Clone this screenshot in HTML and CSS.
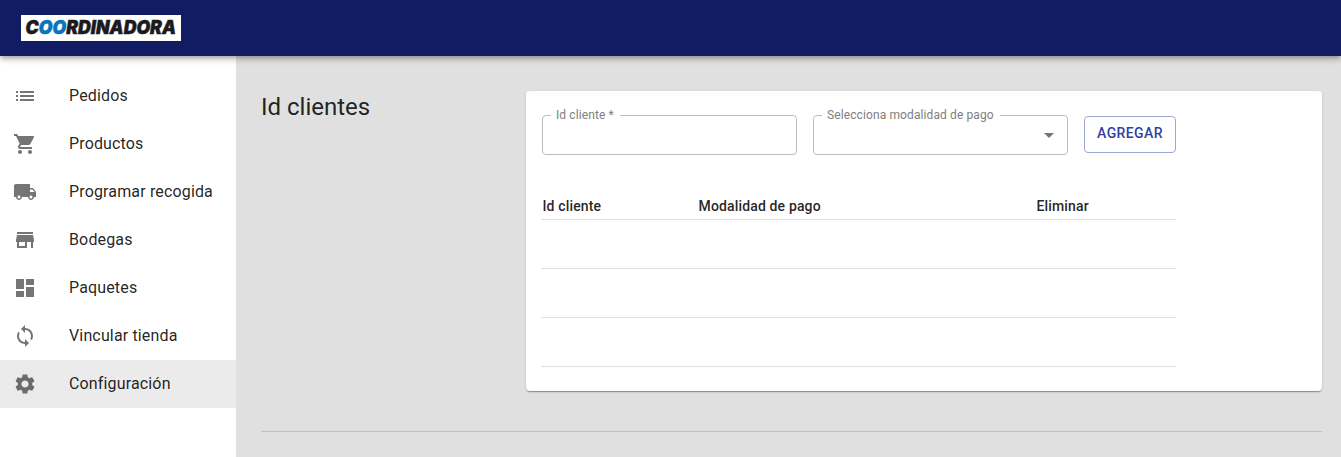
FILE: index.html
```html
<!DOCTYPE html>
<html lang="es">
<head>
<meta charset="utf-8">
<title>Coordinadora - Configuración</title>
<link rel="stylesheet" href="styles.css">
</head>
<body>
<header class="appbar">
  <svg class="logo" viewBox="0 0 160 26" role="img" aria-label="Coordinadora">
    <rect width="160" height="26" fill="#fff"/>
    <text class="logo-text" x="4.600" y="19" textLength="150.400" lengthAdjust="spacingAndGlyphs">C<tspan class="logo-blue">OO</tspan>RDINADORA</text>
  </svg>
</header>
<div class="body">
  <nav class="sidebar">
    <a class="item"><svg class="icon" viewBox="0 0 24 24"><path d="M3 13h2v-2H3v2zm0 4h2v-2H3v2zm0-8h2V7H3v2zm4 4h14v-2H7v2zm0 4h14v-2H7v2zM7 7v2h14V7H7z"/></svg><span>Pedidos</span></a>
    <a class="item"><svg class="icon" viewBox="0 0 24 24"><path d="M7 18c-1.100 0-1.990.9-1.990 2S5.900 22 7 22s2-.9 2-2-.9-2-2-2zM1 2v2h2l3.600 7.590-1.350 2.450c-.16.280-.25.610-.25.960 0 1.100.9 2 2 2h12v-2H7.420c-.14 0-.25-.11-.25-.25l.03-.12.900-1.630h7.450c.75 0 1.410-.41 1.750-1.030l3.580-6.490c.08-.14.120-.31.120-.48 0-.55-.45-1-1-1H5.210l-.94-2H1zm16 16c-1.100 0-1.990.9-1.990 2s.89 2 1.990 2 2-.9 2-2-.9-2-2-2z"/></svg><span>Productos</span></a>
    <a class="item"><svg class="icon" viewBox="0 0 24 24"><path d="M20 8h-3V4H3c-1.100 0-2 .9-2 2v11h2c0 1.660 1.340 3 3 3s3-1.340 3-3h6c0 1.660 1.340 3 3 3s3-1.340 3-3h2v-5l-3-4zM6 18.500c-.83 0-1.500-.67-1.500-1.500s.67-1.500 1.500-1.500 1.500.67 1.500 1.500-.67 1.500-1.500 1.500zm13.500-9l1.960 2.500H17V9.500h2.500zm-1.500 9c-.83 0-1.500-.67-1.500-1.500s.67-1.500 1.500-1.500 1.500.67 1.500 1.500-.67 1.500-1.500 1.500z"/></svg><span>Programar recogida</span></a>
    <a class="item"><svg class="icon" viewBox="0 0 24 24"><path d="M20 4H4v2h16V4zm1 10v-2l-1-5H4l-1 5v2h1v6h10v-6h4v6h2v-6h1zm-9 4H6v-4h6v4z"/></svg><span>Bodegas</span></a>
    <a class="item"><svg class="icon" viewBox="0 0 24 24"><path d="M3 13h8V3H3v10zm0 8h8v-6H3v6zm10 0h8V11h-8v10zm0-18v6h8V3h-8z"/></svg><span>Paquetes</span></a>
    <a class="item"><svg class="icon" viewBox="0 0 24 24"><path d="M12 4V1L8 5l4 4V6c3.310 0 6 2.690 6 6 0 1.010-.25 1.970-.7 2.800l1.460 1.460C19.540 15.030 20 13.570 20 12c0-4.420-3.580-8-8-8zm0 14c-3.310 0-6-2.690-6-6 0-1.010.25-1.970.7-2.800L5.240 7.740C4.460 8.970 4 10.430 4 12c0 4.420 3.580 8 8 8v3l4-4-4-4v3z"/></svg><span>Vincular tienda</span></a>
    <a class="item selected"><svg class="icon" viewBox="0 0 24 24"><path d="M19.140 12.940c.04-.3.060-.61.060-.94 0-.32-.02-.64-.07-.94l2.030-1.580c.18-.14.230-.41.120-.61l-1.920-3.320c-.12-.22-.37-.29-.59-.22l-2.390.96c-.5-.38-1.030-.7-1.620-.94l-.36-2.540c-.04-.24-.24-.41-.48-.41h-3.840c-.24 0-.43.170-.47.410l-.36 2.540c-.59.240-1.130.57-1.620.94l-2.390-.96c-.22-.08-.47 0-.59.220L2.740 8.870c-.12.210-.08.470.12.610l2.030 1.580c-.05.300-.09.630-.09.940s.02.640.07.940l-2.030 1.580c-.18.140-.23.410-.12.610l1.920 3.320c.12.220.37.290.59.220l2.390-.96c.5.380 1.030.7 1.620.94l.36 2.540c.05.240.24.410.48.410h3.840c.24 0 .44-.17.470-.41l.36-2.540c.59-.24 1.130-.56 1.620-.94l2.390.96c.22.080.47 0 .59-.22l1.920-3.320c.12-.22.070-.47-.12-.61l-2.010-1.580zM12 15.600c-1.980 0-3.600-1.620-3.600-3.600s1.620-3.600 3.600-3.600 3.600 1.620 3.600 3.600-1.620 3.600-3.600 3.600z"/></svg><span>Configuración</span></a>
  </nav>
  <main class="content">
    <section class="section">
      <h1 class="title">Id clientes</h1>
      <div class="card">
        <div class="form">
          <fieldset class="field"><legend>Id cliente&nbsp;*</legend></fieldset>
          <fieldset class="field"><legend>Selecciona modalidad de pago</legend><svg class="arrow" viewBox="0 0 24 24"><path d="M7 10l5 5 5-5z"/></svg></fieldset>
          <button class="add">AGREGAR</button>
        </div>
        <div class="table">
          <div class="row head"><span>Id cliente</span><span>Modalidad de pago</span><span>Eliminar</span></div>
          <div class="row"></div>
          <div class="row"></div>
          <div class="row"></div>
        </div>
      </div>
    </section>
    <hr class="divider">
  </main>
</div>
</body>
</html>
```
FILE: styles.css
```css
* { box-sizing: border-box; }
body {
  margin: 0;
  height: 457px;
  overflow: hidden;
  display: flex;
  flex-direction: column;
  background: #e0e0e0;
  color: rgba(0, 0, 0, 0.87);
  font-family: Roboto, "Liberation Sans", sans-serif;
}
.appbar {
  position: relative;
  z-index: 1;
  flex: 0 0 56px;
  display: flex;
  align-items: center;
  padding-left: 21px;
  background: #121c62;
  box-shadow: 0 2px 4px -1px rgba(0,0,0,.2), 0 4px 5px rgba(0,0,0,.14), 0 1px 10px rgba(0,0,0,.12);
}
.logo { width: 160px; height: 26px; }
.logo-text {
  font: italic 900 18.5px Inter, "Liberation Sans", sans-serif;
  fill: #1d1a1e;
  stroke: #1d1a1e;
  stroke-width: 0.5;
}
.logo-blue { fill: #0874bd; stroke: #0874bd; }
.body { flex: 1; display: flex; min-height: 0; }
.sidebar { width: 236px; padding-top: 16px; background: #fff; }
.item {
  display: flex;
  align-items: center;
  gap: 32px;
  height: 48px;
  padding-left: 13px;
  font-size: 16px;
  line-height: 24px;
  letter-spacing: 0.15px;
}
.item.selected { background: #ebebeb; }
.icon { width: 24px; height: 24px; fill: #757575; }
.selected .icon { fill: #6b6b6b; }
.content { flex: 1; padding: 35px 19px 0 25px; }
.section { display: grid; grid-template-columns: 265px 1fr; }
.title { margin: 0; font-size: 24px; font-weight: 400; line-height: 32px; }
.card {
  height: 300px;
  padding: 24px 16px;
  border-radius: 4px;
  background: #fff;
  box-shadow: 0 2px 1px -1px rgba(0,0,0,.2), 0 1px 1px rgba(0,0,0,.14), 0 1px 3px rgba(0,0,0,.12);
}
.form { display: flex; gap: 16px; height: 40px; }
.field {
  width: 255px;
  height: 47px;
  margin: -7px 0 0;
  padding: 0 6px 0 8px;
  border: 1px solid #bdbdbd;
  border-radius: 4px;
}
.field legend {
  height: 15px;
  padding: 0 6px 0 5px;
  color: #808080;
  font-size: 12px;
  line-height: 15px;
  letter-spacing: 0.11px;
}
.arrow { display: block; width: 24px; height: 24px; margin-left: auto; fill: #757575; }
.add {
  width: 92px;
  height: 37px;
  margin-top: 1px;
  padding: 0 0 3px;
  border: 1px solid #a0a6d2;
  border-radius: 4px;
  background: transparent;
  color: #303f9f;
  font: 500 14px Roboto, sans-serif;
  letter-spacing: 0.4px;
}
.table { width: 635px; margin: 37px 0 0 -1px; }
.row { height: 49px; border-bottom: 1px solid #e0e0e0; }
.row.head {
  display: grid;
  grid-template-columns: 156px 338px 1fr;
  height: 28px;
  padding-left: 1.500px;
  font-size: 14px;
  font-weight: 500;
  line-height: 28px;
  letter-spacing: 0.15px;
}
.divider { margin: 40px 0 0; border: 0; border-top: 1px solid #c2c2c2; }
```
